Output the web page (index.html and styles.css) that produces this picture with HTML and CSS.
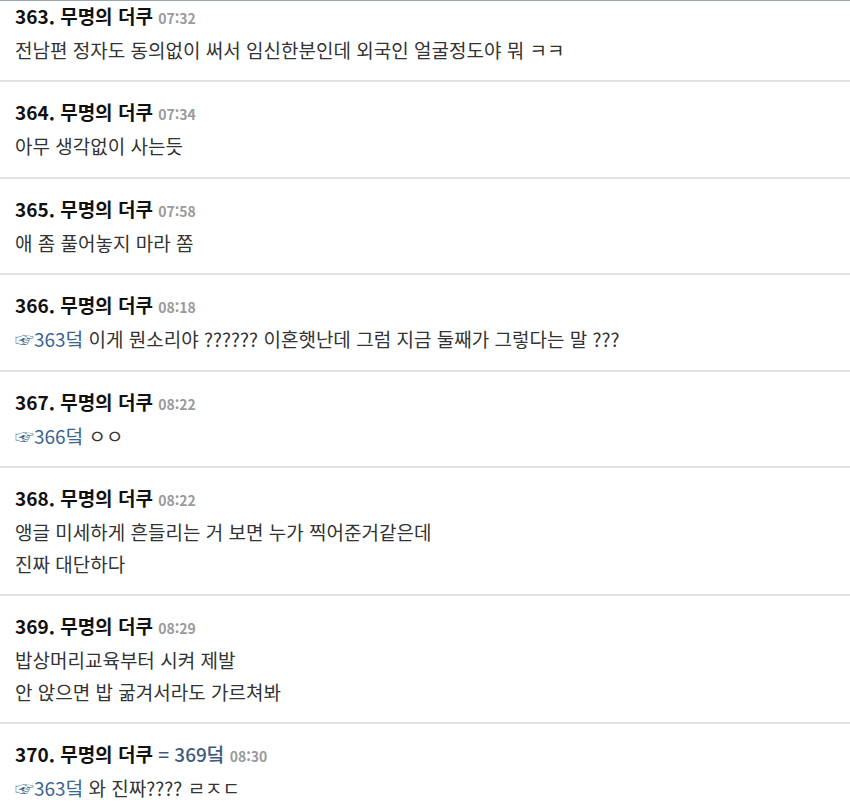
FILE: index.html
```html
<!DOCTYPE html>
<html lang="ko">
<head>
<meta charset="utf-8">
<link rel="stylesheet" href="styles.css">
</head>
<body>
<div class="comments">
  <div class="comment comment--first">
    <div class="head"><span class="num">363.</span> <span class="name">무명의 더쿠</span> <span class="time">07:32</span></div>
    <div class="body">전남편 정자도 동의없이 써서 임신한분인데 외국인 얼굴정도야 뭐 ㅋㅋ</div>
  </div>
  <div class="comment">
    <div class="head"><span class="num">364.</span> <span class="name">무명의 더쿠</span> <span class="time">07:34</span></div>
    <div class="body">아무 생각없이 사는듯</div>
  </div>
  <div class="comment">
    <div class="head"><span class="num">365.</span> <span class="name">무명의 더쿠</span> <span class="time">07:58</span></div>
    <div class="body">애 좀 풀어놓지 마라 쫌</div>
  </div>
  <div class="comment">
    <div class="head"><span class="num">366.</span> <span class="name">무명의 더쿠</span> <span class="time">08:18</span></div>
    <div class="body"><span class="ref">☞363덬</span> 이게 뭔소리야 ?????? 이혼햇난데 그럼 지금 둘째가 그렇다는 말 ???</div>
  </div>
  <div class="comment">
    <div class="head"><span class="num">367.</span> <span class="name">무명의 더쿠</span> <span class="time">08:22</span></div>
    <div class="body"><span class="ref">☞366덬</span> ㅇㅇ</div>
  </div>
  <div class="comment">
    <div class="head"><span class="num">368.</span> <span class="name">무명의 더쿠</span> <span class="time">08:22</span></div>
    <div class="body">앵글 미세하게 흔들리는 거 보면 누가 찍어준거같은데<br>진짜 대단하다</div>
  </div>
  <div class="comment">
    <div class="head"><span class="num">369.</span> <span class="name">무명의 더쿠</span> <span class="time">08:29</span></div>
    <div class="body">밥상머리교육부터 시켜 제발<br>안 앉으면 밥 굶겨서라도 가르쳐봐</div>
  </div>
  <div class="comment">
    <div class="head"><span class="num">370.</span> <span class="name">무명의 더쿠</span> <span class="same">= 369덬</span> <span class="time">08:30</span></div>
    <div class="body"><span class="ref">☞363덬</span> 와 진짜???? ㄹㅈㄷ</div>
  </div>
</div>
</body>
</html>
```
FILE: styles.css
```css
html, body {
  margin: 0;
  padding: 0;
  background: #fff;
}
body {
  font-family: "Noto Sans CJK KR", "Noto Sans", sans-serif;
  color: #333;
}
.comments {
  border-top: 1px solid #9aa6b2;
}
.comment {
  padding: 16px 15px 15px;
  border-bottom: 2px solid #e2e2e2;
}
.comment--first {
  padding-top: 1px;
  padding-bottom: 14.5px;
}
.head {
  font-size: 19px;
  line-height: 28px;
  font-weight: 700;
  color: #111;
  white-space: nowrap;
}
.head span {
  line-height: 1;
}
.time {
  font-size: 14px;
  color: #9a9a9a;
  font-weight: 700;
}
.same {
  color: #3d5a7a;
  font-weight: 500;
}
.body {
  margin-top: 4px;
  font-size: 19px;
  line-height: 31.5px;
}
.ref {
  color: #3a6592;
  line-height: 1;
}
```
